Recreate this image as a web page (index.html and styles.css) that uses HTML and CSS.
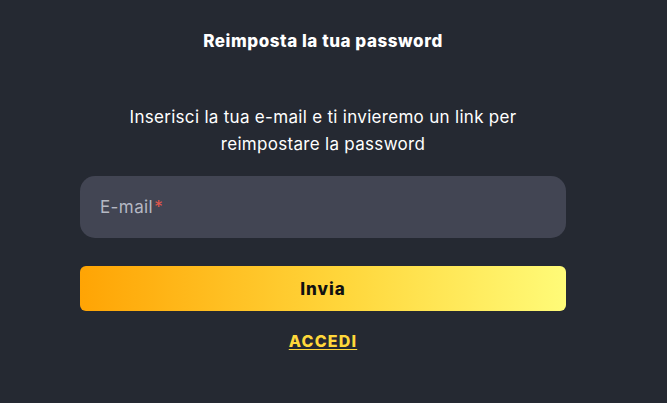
FILE: index.html
```html
<!DOCTYPE html>
<html lang="it">
<head>
    <meta charset="UTF-8">
    <meta name="viewport" content="width=device-width, initial-scale=1.0">
    <title>Reimposta la tua password</title>
    <link rel="stylesheet" href="styles.css">
</head>
<body>
    <div class="container">
        <h1 class="title">Reimposta la tua password</h1>
        <p class="intro">Inserisci la tua e-mail e ti invieremo un link per reimpostare la password</p>
        <form class="reset-form">
            <label class="field">
                <input type="email" class="field-input" placeholder=" ">
                <span class="field-label">E-mail<span class="required">*</span></span>
            </label>
            <button type="button" class="submit-button">Invia</button>
        </form>
        <a href="#" class="login-link">ACCEDI</a>
    </div>
</body>
</html>
```

FILE: styles.css
```css
body {
    margin: 0;
    background-color: #252932;
    color: #fff;
    font-family: Inter, "Noto Sans", Arial, sans-serif;
}
.container {
    width: 486px;
    margin-left: 80px;
    padding-top: 30px;
    display: flex;
    flex-direction: column;
    align-items: center;
}
.title {
    margin: 0;
    font-size: 17px;
    font-weight: 800;
    line-height: 22px;
    letter-spacing: 0.55px;
}
.intro {
    margin: 52px 0 0;
    width: 420px;
    text-align: center;
    font-size: 17px;
    line-height: 27px;
    letter-spacing: 0.3px;
}
.reset-form {
    width: 100%;
    margin-top: 18px;
    display: flex;
    flex-direction: column;
    gap: 28px;
}
.field {
    position: relative;
    display: block;
}
.field-input {
    width: 100%;
    height: 62px;
    box-sizing: border-box;
    border: none;
    border-radius: 15px;
    background-color: #424553;
    padding: 0 20px;
    color: #fff;
    font: inherit;
    outline: none;
}
.field-label {
    position: absolute;
    left: 20px;
    top: 21px;
    font-size: 17px;
    line-height: 20px;
    letter-spacing: 0.4px;
    color: #b5b8c3;
    pointer-events: none;
}
.required {
    color: #e5574b;
    margin-left: 1px;
}
.submit-button {
    height: 45px;
    border: none;
    border-radius: 6px;
    background: linear-gradient(90deg, #ffa404 0%, #ffd73c 55%, #fffb78 100%);
    color: #111;
    font-family: inherit;
    font-size: 17px;
    font-weight: 800;
    letter-spacing: 1px;
    cursor: pointer;
}
.login-link {
    margin-top: 20px;
    color: #ffd83a;
    font-size: 16px;
    font-weight: 800;
    line-height: 20px;
    letter-spacing: 1.2px;
    text-decoration: underline;
    text-underline-offset: 2px;
}
```
